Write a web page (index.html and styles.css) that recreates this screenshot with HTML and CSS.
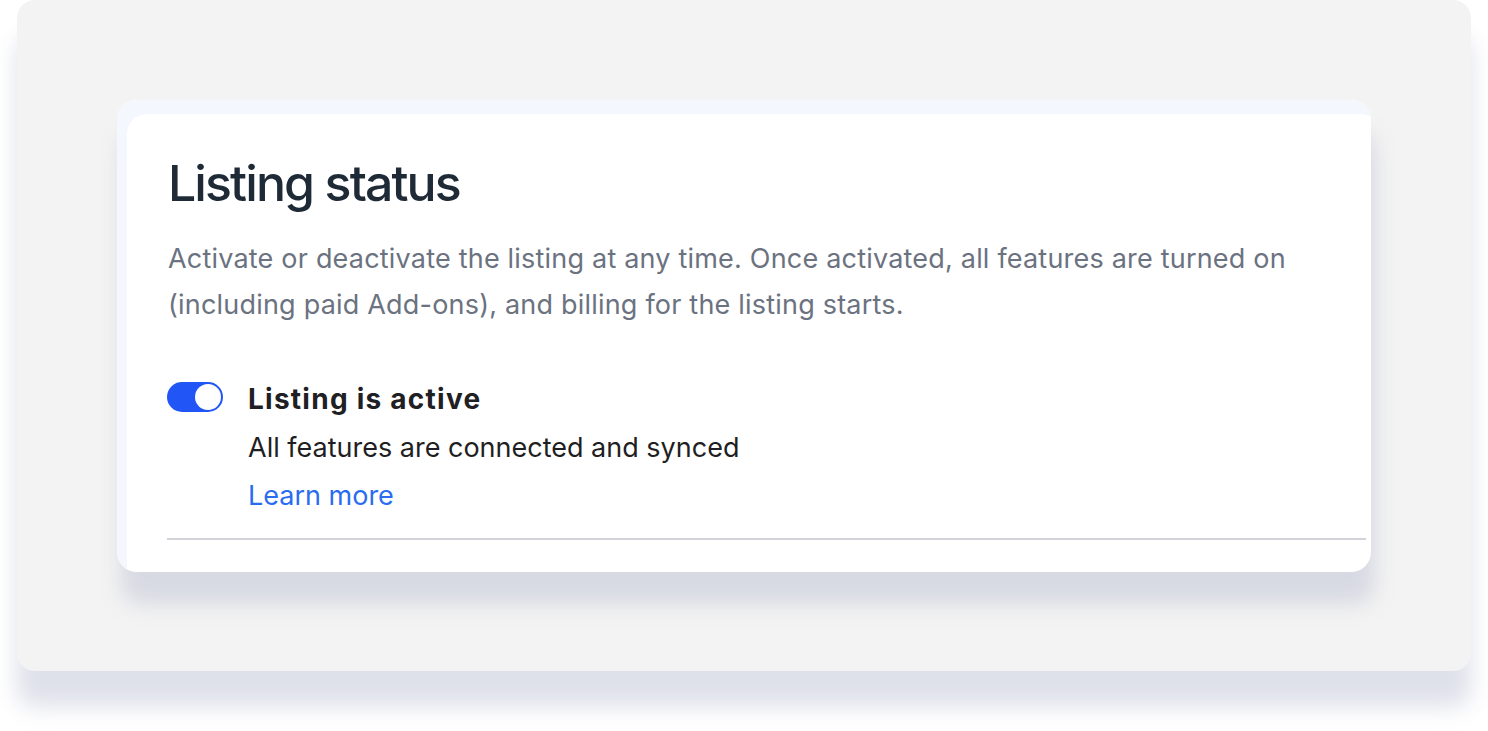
FILE: index.html
```html
<!DOCTYPE html>
<html lang="en">
<head>
<meta charset="utf-8">
<title>Listing status</title>
<link rel="stylesheet" href="styles.css">
</head>
<body>
<div class="panel">
  <section class="card">
    <h1 class="title">Listing status</h1>
    <p class="desc">Activate or deactivate the listing at any time. Once activated, all features are turned on (including paid Add-ons), and billing for the listing starts.</p>
    <div class="status">
      <span class="toggle" role="switch" aria-checked="true"><span class="knob"></span></span>
      <div class="status-text">
        <div class="status-title">Listing is active</div>
        <div class="status-sub">All features are connected and synced</div>
        <a class="link" href="#">Learn more</a>
      </div>
    </div>
    <hr class="divider">
  </section>
</div>
</body>
</html>
```
FILE: styles.css
```css
* { box-sizing: border-box; }
html, body { margin: 0; padding: 0; background: #ffffff; }
body {
  font-family: "Inter", "Liberation Sans", sans-serif;
  height: 731px;
  overflow: hidden;
}
.panel {
  margin: 0 17px;
  height: 671px;
  background: #f3f3f3;
  border-radius: 18px;
  padding: 100px 100px 0 100px;
  box-shadow: 0 36px 22px rgba(170, 176, 200, 0.38);
}
.card {
  height: 472px;
  background: #ffffff;
  border-radius: 20px;
  box-shadow: inset 10px 14px 0 0 #f4f7fe, 4px 32px 20px rgba(170, 176, 200, 0.36);
  padding: 48px 5px 0 50px;
  display: flex;
  flex-direction: column;
}
.title {
  margin: 0 0 0 1px;
  font-size: 50px;
  font-weight: 500;
  line-height: 70px;
  color: #1f2a37;
  letter-spacing: -1.9px;
}
.desc {
  margin: 18px 0 0 1px;
  font-size: 27px;
  line-height: 46px;
  color: #6b7280;
  letter-spacing: 0.2px;
  max-width: 1198px;
}
.status {
  display: flex;
  gap: 25px;
  margin-top: 51px;
}
.toggle {
  flex: none;
  width: 56px;
  height: 30px;
  border-radius: 15px;
  background: #2255f5;
  display: flex;
  align-items: center;
  justify-content: flex-end;
  padding-right: 2px;
  margin-top: 3px;
}
.knob {
  width: 26px;
  height: 26px;
  border-radius: 50%;
  background: #ffffff;
}
.status-text {
  display: flex;
  flex-direction: column;
}
.status-title {
  font-size: 28px;
  font-weight: 700;
  line-height: 40px;
  color: #1f2024;
  letter-spacing: 1.25px;
}
.status-sub {
  font-size: 27px;
  line-height: 48px;
  color: #1f1f23;
  margin-top: 5px;
}
.link {
  font-size: 27px;
  line-height: 48px;
  color: #2a6cf0;
  text-decoration: none;
}
.divider {
  margin: 18px 0 0 0;
  border: none;
  height: 2px;
  background: #d1d3d8;
}
```
